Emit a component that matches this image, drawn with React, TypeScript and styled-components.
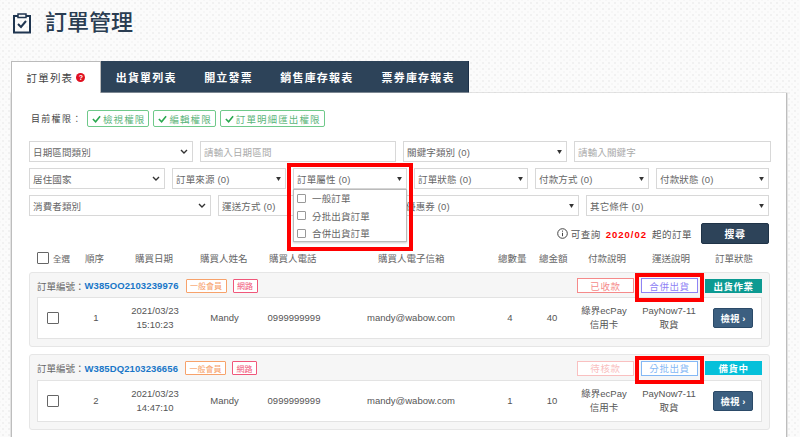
import React from "react";
import styled, { createGlobalStyle } from "styled-components";

const Global = createGlobalStyle`
  html, body { margin: 0; padding: 0; }
  body {
    width: 800px; height: 437px; overflow: hidden;
    background-color: #fbfbfb;
    background-image:
      radial-gradient(#f1f1f1 0.9px, transparent 1.2px),
      radial-gradient(#f6f6f6 0.9px, transparent 1.2px);
    background-size: 6px 6px, 6px 6px;
    background-position: 0 0, 3px 3px;
    font-family: "Liberation Sans", "Noto Sans CJK TC", sans-serif;
    color: #555;
  }
`;
const Page = styled.div`
  width: 800px; height: 437px; overflow: hidden; position: relative;
  padding: 12px 13px 0 11px; box-sizing: border-box;
`;
const TitleRow = styled.div`
  display: flex; align-items: center; gap: 13px; height: 22px; margin-bottom: 27px; padding-left: 1px;
`;
const Title = styled.h1`
  margin: 0; font-size: 22px; font-weight: 500; color: #2a3d52; line-height: 22px;
`;
const Tabs = styled.div`
  display: flex; width: 458px; height: 32px; box-sizing: border-box; background: #2d4359; border-right: 1px solid #1c3048;
`;
const Tab = styled.div<{ $active?: boolean; $w: number }>`
  width: ${p => p.$w}px; display: flex; align-items: center; justify-content: center; gap: 3px;
  font-size: 11px; letter-spacing: 1.2px; font-weight: ${p => (p.$active ? 400 : 700)};
  color: ${p => (p.$active ? "#444" : "#fff")};
  background: ${p => (p.$active ? "#fff" : "transparent")};
  ${p => p.$active && "border: 1px solid #bbb; border-bottom: 0; box-sizing: border-box; font-size: 10.5px;"}
`;
const Help = styled.span`
  width: 9px; height: 9px; border-radius: 50%; background: #e01020; color: #fff;
  font-size: 7px; font-weight: 700; line-height: 9px; text-align: center; letter-spacing: 0;
`;
const Panel = styled.div`
  width: 776px; height: 360px; box-sizing: border-box; background: #fff;
  border: 1px solid #bdbdbd; border-top: 0; padding: 17px 16px 0 17px;
  box-shadow: 0 0 0 0.5px #ccc;
`;
const Perms = styled.div`display: flex; align-items: center; gap: 4px; height: 17px; margin-bottom: 14px;`;
const PermLabel = styled.span`font-size: 9px; letter-spacing: 1.3px; width: 52px; margin-left: 2px; color: #444; white-space: nowrap;`;
const Perm = styled.span`
  height: 17px; box-sizing: border-box; border: 1px solid #6fc98a; border-radius: 2px; padding: 0 3px 0 4px;
  display: flex; align-items: center; gap: 2px; font-size: 9.5px; letter-spacing: 1.1px; color: #5cb57a;
`;
const FilterRow = styled.div`display: flex; gap: 7px; height: 21px; margin-bottom: 6px;`;
const Field = styled.div<{ $w: number; $ph?: boolean }>`
  position: relative; width: ${p => p.$w}px; height: 21px; box-sizing: border-box;
  border: 1px solid #d8d8d8; background: #fff; display: flex; align-items: center; justify-content: space-between;
  padding: 0 4px 0 3px; font-size: 9.5px; letter-spacing: 0.15px; color: ${p => (p.$ph ? "#aaa" : "#666")}; flex: none;
`;
const Menu = styled.div`
  position: absolute; left: -1px; top: 20px; width: 114px; height: 53px; box-sizing: border-box; z-index: 2;
  background: #fff; border: 1px solid #bbb; box-shadow: 0 1px 2px rgba(0,0,0,.2);
  display: flex; flex-direction: column; justify-content: center; gap: 3.5px; padding-left: 3px;
`;
const MenuItem = styled.div`display: flex; align-items: center; gap: 6px; height: 14px; font-size: 9.5px; color: #666;`;
const SmallBox = styled.span`width: 7px; height: 7px; border: 1px solid #999; border-radius: 1px;`;
const Highlight = styled.div<{ $l: number; $t: number; $w: number; $h: number }>`
  position: absolute; left: ${p => p.$l}px; top: ${p => p.$t}px; width: ${p => p.$w}px; height: ${p => p.$h}px;
  box-sizing: border-box; border: 4px solid #f00; z-index: 3; pointer-events: none;
`;
const SearchRow = styled.div`
  display: flex; align-items: center; justify-content: flex-end; gap: 9px; height: 21px; margin-top: 7px; margin-bottom: 5px;
  padding-right: 1px; font-size: 9.5px; letter-spacing: 0.5px; color: #555;
`;
const Info = styled.span`display: flex; align-items: center; gap: 3px;`;
const Red = styled.b`color: #f00; margin: 0 5px; letter-spacing: 1px; font-weight: 700;`;
const SearchBtn = styled.button`
  width: 68px; height: 21px; border: 1px solid #1f3347; border-radius: 2px; background: #2d4359; color: #fff;
  font: 700 10px "Liberation Sans", "Noto Sans CJK TC", sans-serif; letter-spacing: 0.5px; padding: 0;
`;
const HeadRow = styled.div`
  display: grid; grid-template-columns: 48px 50px 65px 69px 109px 120px 41px 49px 64px 63px 1fr;
  align-items: center; height: 18px; margin-bottom: 5px; padding-left: 8px;
  font-size: 9.5px; color: #666; white-space: nowrap;
`;
const BigBox = styled.span`
  display: inline-block; width: 12px; height: 12px; box-sizing: border-box; border: 1px solid #666; border-radius: 1px; background: #fff; flex: none;
`;
const SelectAll = styled.span`display: flex; align-items: center; gap: 4px; font-size: 8.5px;`;
const Card = styled.div`
  width: 741px; box-sizing: border-box; background: #f6f6f6; border: 1px solid #e6e6e6; border-radius: 3px;
  padding: 0 7px 7px 7px; margin-bottom: 7px;
`;
const CardHead = styled.div<{ $h: number }>`
  display: flex; align-items: center; height: ${p => p.$h}px; box-sizing: border-box; padding-top: 1px;
`;
const OrderLabel = styled.span`font-size: 9.5px; color: #666; white-space: nowrap;`;
const OrderNo = styled.span`font-size: 9.5px; font-weight: 700; color: #1976c8; margin-right: 7px; letter-spacing: 0.1px;`;
const Tag = styled.span<{ $c: string }>`
  height: 14px; box-sizing: border-box; border: 1px solid ${p => p.$c}; color: ${p => p.$c}; background: #fff;
  font-size: 8px; padding: 0 3.5px; display: flex; align-items: center; margin-right: 6px; border-radius: 1px;
`;
const Spacer = styled.span`flex: 1;`;
const Pill = styled.span<{ $c: string; $w: number }>`
  width: ${p => p.$w}px; height: 15px; box-sizing: border-box; border: 1px solid ${p => p.$c}; color: ${p => p.$c};
  background: #fff; font-size: 9.5px; letter-spacing: 0.6px; display: flex; align-items: center; justify-content: center; margin-right: 7px;
`;
const Status = styled.span<{ $bg: string }>`
  width: 57px; height: 14px; background: ${p => p.$bg}; color: #fff; font-size: 9.5px; font-weight: 700; letter-spacing: 0.5px;
  display: flex; align-items: center; justify-content: center;
`;
const Inner = styled.div`
  display: grid; grid-template-columns: 35px 28px 90px 49px 90px 144px 54px 30px 74px 56px 1fr;
  height: 42px; background: #fff; border: 1px solid #e3e3e3; box-sizing: border-box; align-items: center;
  padding-left: 9px; font-size: 9.5px; color: #555; line-height: 14px; text-align: center; white-space: nowrap;
`;
const BoxCell = styled.span`text-align: left; display: flex;`;
const ViewBtn = styled.button`
  width: 40px; height: 20px; border: 1px solid #2b4a68; border-radius: 2px; background: #3c5f80; color: #fff; justify-self: end; margin-right: 8px;
  font: 700 9.5px "Liberation Sans", "Noto Sans CJK TC", sans-serif; padding: 0;
`;

const Check = () => (
  <svg width="9" height="8" viewBox="0 0 10 8" fill="none" stroke="#2aa84f" strokeWidth="1.8"><path d="M1 4l3 3 5-6" /></svg>
);
const Caret = () => (
  <svg width="5" height="4" viewBox="0 0 6 5" fill="#333"><path d="M0 0h6L3 5z" /></svg>
);
const Chevron = () => (
  <svg width="8" height="6" viewBox="0 0 8 6" fill="none" stroke="#333" strokeWidth="1.4"><path d="M1 1l3 3 3-3" /></svg>
);
const ClipIcon = () => (
  <svg width="20" height="22" viewBox="0 0 20 22" fill="none" stroke="#1f3550" strokeWidth="2">
    <path d="M6 4H2v16.500h16V4h-4" />
    <path d="M6 2h8v3.500H6z" strokeWidth="1.500" />
    <path d="M6 12l3 3 5-6" />
  </svg>
);
const InfoIcon = () => (
  <svg width="11" height="11" viewBox="0 0 11 11" fill="none" stroke="#444"><circle cx="5.500" cy="5.500" r="4.800" /><path d="M5.500 4.800v3.400M5.500 2.600v1.100" /></svg>
);

const Sel = ({ w, t, kind }: { w: number; t: string; kind: "caret" | "chev" }) => (
  <Field $w={w}><span>{t}</span>{kind === "caret" ? <Caret /> : <Chevron />}</Field>
);

type Order = { no: string; idx: string; time: string; qty: string; total: string; pay: string; payC: string; ship: string; shipC: string; st: string; stC: string; head: number };
const orders: Order[] = [
  { no: "W385OO2103239976", idx: "1", time: "15:10:23", qty: "4", total: "40", pay: "已收款", payC: "#f58a8a", ship: "合併出貨", shipC: "#8f83f5", st: "出貨作業", stC: "#0c9a92", head: 24 },
  { no: "W385DQ2103236656", idx: "2", time: "14:47:10", qty: "1", total: "10", pay: "待核款", payC: "#f9c0c0", ship: "分批出貨", shipC: "#84b8f5", st: "備貨中", stC: "#05c0da", head: 25 },
];

export default function App() {
  return (
    <Page>
      <Global />
      <TitleRow><ClipIcon /><Title>訂單管理</Title></TitleRow>
      <Tabs>
        <Tab $active $w={90}>訂單列表<Help>?</Help></Tab>
        <Tab $w={91}>出貨單列表</Tab>
        <Tab $w={74}>開立發票</Tab>
        <Tab $w={103}>銷售庫存報表</Tab>
        <Tab $w={100}>票券庫存報表</Tab>
      </Tabs>
      <Panel>
        <Perms>
          <PermLabel>目前權限：</PermLabel>
          <Perm><Check />檢視權限</Perm>
          <Perm><Check />編輯權限</Perm>
          <Perm><Check />訂單明細匯出權限</Perm>
        </Perms>
        <FilterRow>
          <Sel w={164} t="日期區間類別" kind="chev" />
          <Field $w={196} $ph>請輸入日期區間</Field>
          <Sel w={164} t="關鍵字類別 (0)" kind="caret" />
          <Field $w={197} $ph>請輸入關鍵字</Field>
        </FilterRow>
        <FilterRow>
          <Sel w={136} t="居住國家" kind="chev" />
          <Sel w={114} t="訂單來源 (0)" kind="caret" />
          <Field $w={114}>
            <span>訂單屬性 (0)</span><Caret />
            <Menu>
              <MenuItem><SmallBox />一般訂單</MenuItem>
              <MenuItem><SmallBox />分批出貨訂單</MenuItem>
              <MenuItem><SmallBox />合併出貨訂單</MenuItem>
            </Menu>
          </Field>
          <Sel w={114} t="訂單狀態 (0)" kind="caret" />
          <Sel w={114} t="付款方式 (0)" kind="caret" />
          <Sel w={113} t="付款狀態 (0)" kind="caret" />
        </FilterRow>
        <FilterRow>
          <Sel w={182} t="消費者類別" kind="chev" />
          <Sel w={177} t="運送方式 (0)" kind="caret" />
          <Sel w={177} t="優惠券 (0)" kind="caret" />
          <Sel w={183} t="其它條件 (0)" kind="caret" />
        </FilterRow>
        <SearchRow>
          <Info><InfoIcon /><span>可查詢<Red>2020/02</Red>起的訂單</span></Info>
          <SearchBtn>搜尋</SearchBtn>
        </SearchRow>
        <HeadRow>
          <SelectAll><BigBox />全選</SelectAll>
          <span>順序</span>
          <span>購買日期</span>
          <span>購買人姓名</span>
          <span>購買人電話</span>
          <span>購買人電子信箱</span>
          <span>總數量</span>
          <span>總金額</span>
          <span>付款說明</span>
          <span>運送說明</span>
          <span>訂單狀態</span>
        </HeadRow>
        {orders.map(o => (
          <Card key={o.no}>
            <CardHead $h={o.head}>
              <OrderLabel>訂單編號：</OrderLabel>
              <OrderNo>{o.no}</OrderNo>
              <Tag $c="#f7a26b">一般會員</Tag>
              <Tag $c="#f0577a">網路</Tag>
              <Spacer />
              <Pill $c={o.payC} $w={57}>{o.pay}</Pill>
              <Pill $c={o.shipC} $w={57}>{o.ship}</Pill>
              <Status $bg={o.stC}>{o.st}</Status>
            </CardHead>
            <Inner>
              <BoxCell><BigBox /></BoxCell>
              <span>{o.idx}</span>
              <span>2021/03/23<br />{o.time}</span>
              <span>Mandy</span>
              <span>0999999999</span>
              <span>mandy@wabow.com</span>
              <span>{o.qty}</span>
              <span>{o.total}</span>
              <span>綠界ecPay<br />信用卡</span>
              <span>PayNow7-11<br />取貨</span>
              <ViewBtn>檢視 ›</ViewBtn>
            </Inner>
          </Card>
        ))}
      </Panel>
      <Highlight $l={287} $t={163} $w={126} $h={88} />
      <Highlight $l={635} $t={273} $w={69} $h={29} />
      <Highlight $l={635} $t={356} $w={69} $h={28} />
    </Page>
  );
}
